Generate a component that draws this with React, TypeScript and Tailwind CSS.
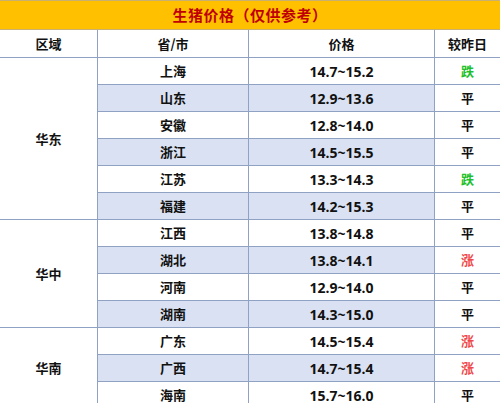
import React from "react";

type Row = { p: string; price: string; c: string };
const groups: { region: string; rows: Row[] }[] = [
  {
    region: "华东",
    rows: [
      { p: "上海", price: "14.7~15.2", c: "跌" },
      { p: "山东", price: "12.9~13.6", c: "平" },
      { p: "安徽", price: "12.8~14.0", c: "平" },
      { p: "浙江", price: "14.5~15.5", c: "平" },
      { p: "江苏", price: "13.3~14.3", c: "跌" },
      { p: "福建", price: "14.2~15.3", c: "平" },
    ],
  },
  {
    region: "华中",
    rows: [
      { p: "江西", price: "13.8~14.8", c: "平" },
      { p: "湖北", price: "13.8~14.1", c: "涨" },
      { p: "河南", price: "12.9~14.0", c: "平" },
      { p: "湖南", price: "14.3~15.0", c: "平" },
    ],
  },
  {
    region: "华南",
    rows: [
      { p: "广东", price: "14.5~15.4", c: "涨" },
      { p: "广西", price: "14.7~15.4", c: "涨" },
      { p: "海南", price: "15.7~16.0", c: "平" },
    ],
  },
];

function changeColor(c: string) {
  if (c === "跌") return "text-[#22c02a]";
  if (c === "涨") return "text-[#f04848]";
  return "text-[#111]";
}

export default function App() {
  let idx = 0;
  return (
    <div
      className="w-[500px] h-[403px] overflow-hidden bg-white"
      style={{ fontFamily: '"Noto Sans CJK SC", "Noto Sans", sans-serif' }}
    >
      <div className="h-[30px] border-t border-[#a8a8a8] bg-[#ffc000] flex items-center justify-center border-b border-[#c9b070]">
        <span className="text-[15px] font-bold text-[#c00000] tracking-[0.5px]">
          生猪价格（仅供参考）
        </span>
      </div>
      <div className="grid grid-cols-[98px_151px_186px_65px] text-[13px] font-bold text-[#111]">
        <div className="h-[28px] flex items-center justify-center border-r border-b border-[#8fa2c4]">区域</div>
        <div className="h-[28px] flex items-center justify-center border-r border-b border-[#8fa2c4]">省/市</div>
        <div className="h-[28px] flex items-center justify-center border-r border-b border-[#8fa2c4]">价格</div>
        <div className="h-[28px] flex items-center justify-center border-b border-[#8fa2c4]">较昨日</div>
        {groups.map((g) => {
          const out: React.ReactNode[] = [];
          const span = g.rows.length;
          out.push(
            <div
              key={g.region}
              className="flex items-center justify-center border-r border-b border-[#8fa2c4] bg-white"
              style={{ gridRow: `span ${span} / span ${span}` }}
            >
              {g.region}
            </div>
          );
          g.rows.forEach((r) => {
            const shaded = idx % 2 === 1;
            idx++;
            const bg = shaded ? "bg-[#d9e1f2]" : "bg-white";
            out.push(
              <div key={r.p + "p"} className={`h-[27px] flex items-center justify-center border-r border-b border-[#8fa2c4] ${bg}`}>
                {r.p}
              </div>,
              <div key={r.p + "v"} className={`h-[27px] flex items-center justify-center border-r border-b border-[#8fa2c4] ${bg} text-[14px]`} style={{ fontFamily: '"Open Sans", "Noto Sans", sans-serif' }}>
                {r.price}
              </div>,
              <div key={r.p + "c"} className={`h-[27px] flex items-center justify-center border-b border-[#8fa2c4] bg-white ${changeColor(r.c)}`}>
                {r.c}
              </div>
            );
          });
          return out;
        })}
      </div>
    </div>
  );
}
